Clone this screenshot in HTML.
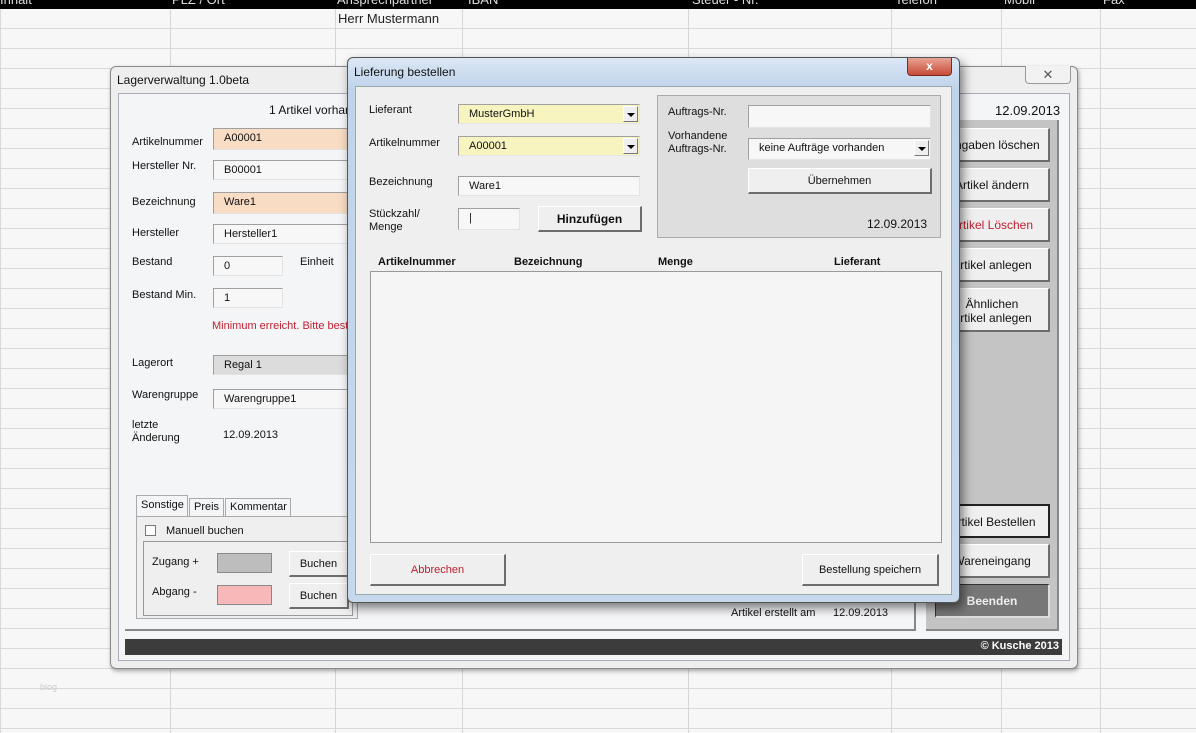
<!DOCTYPE html>
<html><head><meta charset="utf-8"><style>
*{box-sizing:border-box;margin:0;padding:0}
body{width:1196px;height:733px;overflow:hidden;position:relative;font-family:"Liberation Sans",sans-serif;font-size:11px;color:#111;
background-color:#f7f7f7;
background-image:linear-gradient(#dadada 1px,transparent 1px),linear-gradient(90deg,#dadada 1px,transparent 1px);
background-size:100% 20px,100% 100%;background-position:0 8px,0 0;}
.a{position:absolute}
.vl{position:absolute;top:0;width:1px;height:733px;background:#d6d6d6}
.hdr{position:absolute;left:0;top:0;width:1196px;height:9px;background:#000;overflow:hidden}
.hdr span{position:absolute;top:-8px;color:#ddd;font-size:13px}
.lbl{position:absolute;font-size:11px;line-height:13px}
.tb{position:absolute;height:20px;border:1px solid #a0a0a0;border-right-color:#e3e3e3;border-bottom-color:#e3e3e3;background:#f7f7f7;padding:3px 0 0 10px;font-size:11px}
.btn{position:absolute;background:#efefef;border:1px solid #fff;border-right:2px solid #6d6d6d;border-bottom:2px solid #6d6d6d;text-align:center;font-size:11px}
.dd{position:absolute;right:1px;top:1px;width:15px;height:16px;background:#efefef;border:1px solid #fff;border-right-color:#777;border-bottom-color:#777}
.dd:after{content:"";position:absolute;left:3px;top:6px;border-left:4px solid transparent;border-right:4px solid transparent;border-top:4px solid #000}
</style></head><body>
<div class="vl" style="left:170px"></div><div class="vl" style="left:335px"></div><div class="vl" style="left:462px"></div>
<div class="vl" style="left:688px"></div><div class="vl" style="left:891px"></div><div class="vl" style="left:1001px"></div><div class="vl" style="left:1100px"></div>
<div class="hdr"><span style="left:0">Inhalt</span><span style="left:172px">PLZ / Ort</span><span style="left:337px">Ansprechpartner</span><span style="left:468px">IBAN</span><span style="left:692px">Steuer - Nr.</span><span style="left:895px">Telefon</span><span style="left:1004px">Mobil</span><span style="left:1103px">Fax</span></div>
<div class="a" style="left:338px;top:11px;font-size:13px;color:#222">Herr Mustermann</div>
<div class="a" style="left:40px;top:682px;font-size:9px;color:#ccc">blog</div>

<!-- back dialog -->
<div class="a" style="left:110px;top:66px;width:968px;height:603px;background:#eeeeee;border:1px solid #8a8a8a;border-radius:6px;box-shadow:1px 2px 4px rgba(0,0,0,.35)"></div>
<div class="a" style="left:117px;top:73px;font-size:12px">Lagerverwaltung 1.0beta</div>
<div class="a" style="left:1025px;top:66px;width:46px;height:18px;border:1px solid #999;border-top:none;border-radius:0 0 4px 4px;background:#f2f2f2;text-align:center;font-size:13px;color:#555;line-height:17px">✕</div>
<div class="a" style="left:118px;top:93px;width:952px;height:568px;background:#f4f5f7;border:1px solid #aab"></div>
<div class="a" style="left:125px;top:120px;width:791px;height:511px;border-right:2px solid #888;border-bottom:2px solid #888"></div>
<div class="a" style="left:926px;top:120px;width:133px;height:511px;background:#c4c4c4;border-right:2px solid #888;border-bottom:2px solid #888"></div>
<div class="lbl" style="left:269px;top:104px;font-size:12px">1 Artikel vorhanden</div>
<div class="lbl" style="left:995px;top:104px;font-size:13px">12.09.2013</div>
<div class="lbl" style="left:132px;top:136px">Artikelnummer</div>
<div class="tb" style="left:213px;top:128px;width:140px;height:22px;background:#f9dcc4">A00001</div>
<div class="lbl" style="left:132px;top:160px">Hersteller Nr.</div>
<div class="tb" style="left:213px;top:160px;width:140px">B00001</div>
<div class="lbl" style="left:132px;top:196px">Bezeichnung</div>
<div class="tb" style="left:213px;top:192px;width:140px;height:22px;background:#f9dcc4">Ware1</div>
<div class="lbl" style="left:132px;top:227px">Hersteller</div>
<div class="tb" style="left:213px;top:224px;width:140px">Hersteller1</div>
<div class="lbl" style="left:132px;top:256px">Bestand</div>
<div class="tb" style="left:213px;top:256px;width:70px">0</div>
<div class="lbl" style="left:300px;top:256px">Einheit</div>
<div class="lbl" style="left:132px;top:289px">Bestand Min.</div>
<div class="tb" style="left:213px;top:288px;width:70px">1</div>
<div class="lbl" style="left:212px;top:320px;color:#c02030">Minimum erreicht. Bitte bestellen</div>
<div class="lbl" style="left:132px;top:357px">Lagerort</div>
<div class="tb" style="left:213px;top:355px;width:140px;background:#dcdcdc">Regal 1</div>
<div class="lbl" style="left:132px;top:389px">Warengruppe</div>
<div class="tb" style="left:213px;top:389px;width:140px">Warengruppe1</div>
<div class="lbl" style="left:132px;top:419px">letzte<br>Änderung</div>
<div class="lbl" style="left:223px;top:429px">12.09.2013</div>
<!-- tabs -->
<div class="a" style="left:136px;top:495px;width:52px;height:21px;border:1px solid #aaa;border-bottom:none;background:#f4f5f7;padding:3px 0 0 4px">Sonstige</div>
<div class="a" style="left:189px;top:498px;width:35px;height:18px;border:1px solid #aaa;border-bottom:none;padding:2px 0 0 4px">Preis</div>
<div class="a" style="left:225px;top:498px;width:66px;height:18px;border:1px solid #aaa;border-bottom:none;padding:2px 0 0 4px">Kommentar</div>
<div class="a" style="left:136px;top:516px;width:222px;height:103px;border:1px solid #aaa;background:#efefef"></div>
<div class="a" style="left:145px;top:525px;width:11px;height:11px;border:1px solid #777;background:#fff"></div>
<div class="lbl" style="left:166px;top:525px">Manuell buchen</div>
<div class="a" style="left:143px;top:541px;width:210px;height:75px;border:1px solid #999"></div>
<div class="lbl" style="left:152px;top:556px">Zugang +</div>
<div class="a" style="left:217px;top:553px;width:55px;height:20px;background:#bdbdbd;border:1px solid #888"></div>
<div class="btn" style="left:289px;top:551px;width:60px;height:26px;line-height:24px">Buchen</div>
<div class="lbl" style="left:152px;top:586px">Abgang -</div>
<div class="a" style="left:217px;top:585px;width:55px;height:20px;background:#f6b8b8;border:1px solid #888"></div>
<div class="btn" style="left:289px;top:583px;width:60px;height:26px;line-height:24px">Buchen</div>
<div class="lbl" style="left:731px;top:607px">Artikel erstellt am</div>
<div class="lbl" style="left:833px;top:607px">12.09.2013</div>
<!-- right buttons -->
<div class="btn" style="left:935px;top:128px;width:115px;height:34px;line-height:32px;font-size:12px">Eingaben löschen</div>
<div class="btn" style="left:935px;top:168px;width:115px;height:34px;line-height:32px;font-size:12px">Artikel ändern</div>
<div class="btn" style="left:935px;top:208px;width:115px;height:34px;line-height:32px;font-size:12px;color:#c02030">Artikel Löschen</div>
<div class="btn" style="left:935px;top:248px;width:115px;height:34px;line-height:32px;font-size:12px">Artikel anlegen</div>
<div class="btn" style="left:935px;top:288px;width:115px;height:44px;padding-top:8px;line-height:14px;font-size:12px">Ähnlichen<br>Artikel anlegen</div>
<div class="btn" style="left:935px;top:504px;width:115px;height:34px;line-height:32px;font-size:12px;border:2px solid #222">Artikel Bestellen</div>
<div class="btn" style="left:935px;top:544px;width:115px;height:34px;line-height:32px;font-size:12px">Wareneingang</div>
<div class="a" style="left:935px;top:584px;width:115px;height:34px;line-height:32px;font-size:12px;background:#777;color:#eee;font-weight:bold;text-align:center;border:1px solid #333;border-right:2px solid #ddd;border-bottom:2px solid #ddd">Beenden</div>
<div class="a" style="left:125px;top:639px;width:937px;height:16px;background:#3c3c3c;color:#fff;font-weight:bold;text-align:right;padding-right:3px;line-height:15px;font-size:11px">© Kusche 2013</div>

<!-- front dialog -->
<div class="a" style="left:347px;top:57px;width:613px;height:546px;border:1px solid #555;border-radius:6px;background:linear-gradient(#dbe8f6,#bfd3ea 30px,#c6d8ec);box-shadow:3px 5px 10px rgba(0,0,0,.5)"></div>
<div class="a" style="left:354px;top:65px;font-size:12px">Lieferung bestellen</div>
<div class="a" style="left:907px;top:58px;width:45px;height:18px;border:1px solid #7a2a20;border-top:none;border-radius:0 0 4px 4px;background:linear-gradient(#e8a394,#c74a37);color:#fff;text-align:center;font-weight:bold;font-size:12px;line-height:16px">x</div>
<div class="a" style="left:355px;top:86px;width:597px;height:509px;background:#efefef;border:1px solid #9aa"></div>
<div class="lbl" style="left:369px;top:104px">Lieferant</div>
<div class="tb" style="left:458px;top:104px;width:182px;background:#f7f4bf">MusterGmbH<div class="dd"></div></div>
<div class="lbl" style="left:369px;top:137px">Artikelnummer</div>
<div class="tb" style="left:458px;top:136px;width:182px;background:#f7f4bf">A00001<div class="dd"></div></div>
<div class="lbl" style="left:369px;top:176px">Bezeichnung</div>
<div class="tb" style="left:458px;top:176px;width:182px">Ware1</div>
<div class="lbl" style="left:369px;top:208px">Stückzahl/<br>Menge</div>
<div class="tb" style="left:458px;top:208px;width:62px;height:22px;padding-left:10px">|</div>
<div class="btn" style="left:538px;top:206px;width:104px;height:26px;line-height:24px;font-weight:bold;font-size:12px">Hinzufügen</div>
<div class="a" style="left:657px;top:95px;width:284px;height:143px;background:#dedede;border:1px solid #aaa"></div>
<div class="lbl" style="left:668px;top:106px">Auftrags-Nr.</div>
<div class="tb" style="left:748px;top:105px;width:183px;height:23px"></div>
<div class="lbl" style="left:668px;top:130px">Vorhandene<br>Auftrags-Nr.</div>
<div class="tb" style="left:748px;top:138px;width:183px;height:22px;background:#f7f7f7">keine Aufträge vorhanden<div class="dd"></div></div>
<div class="btn" style="left:748px;top:168px;width:184px;height:26px;line-height:24px">Übernehmen</div>
<div class="lbl" style="left:867px;top:218px;font-size:12px">12.09.2013</div>
<div class="lbl" style="left:378px;top:256px;font-weight:bold;font-size:11px">Artikelnummer</div>
<div class="lbl" style="left:514px;top:256px;font-weight:bold">Bezeichnung</div>
<div class="lbl" style="left:658px;top:256px;font-weight:bold">Menge</div>
<div class="lbl" style="left:834px;top:256px;font-weight:bold">Lieferant</div>
<div class="a" style="left:370px;top:271px;width:572px;height:272px;background:#f5f5f5;border:1px solid #999"></div>
<div class="btn" style="left:370px;top:554px;width:136px;height:32px;line-height:30px;color:#c02030">Abbrechen</div>
<div class="btn" style="left:802px;top:554px;width:137px;height:32px;line-height:30px">Bestellung speichern</div>
</body></html>
